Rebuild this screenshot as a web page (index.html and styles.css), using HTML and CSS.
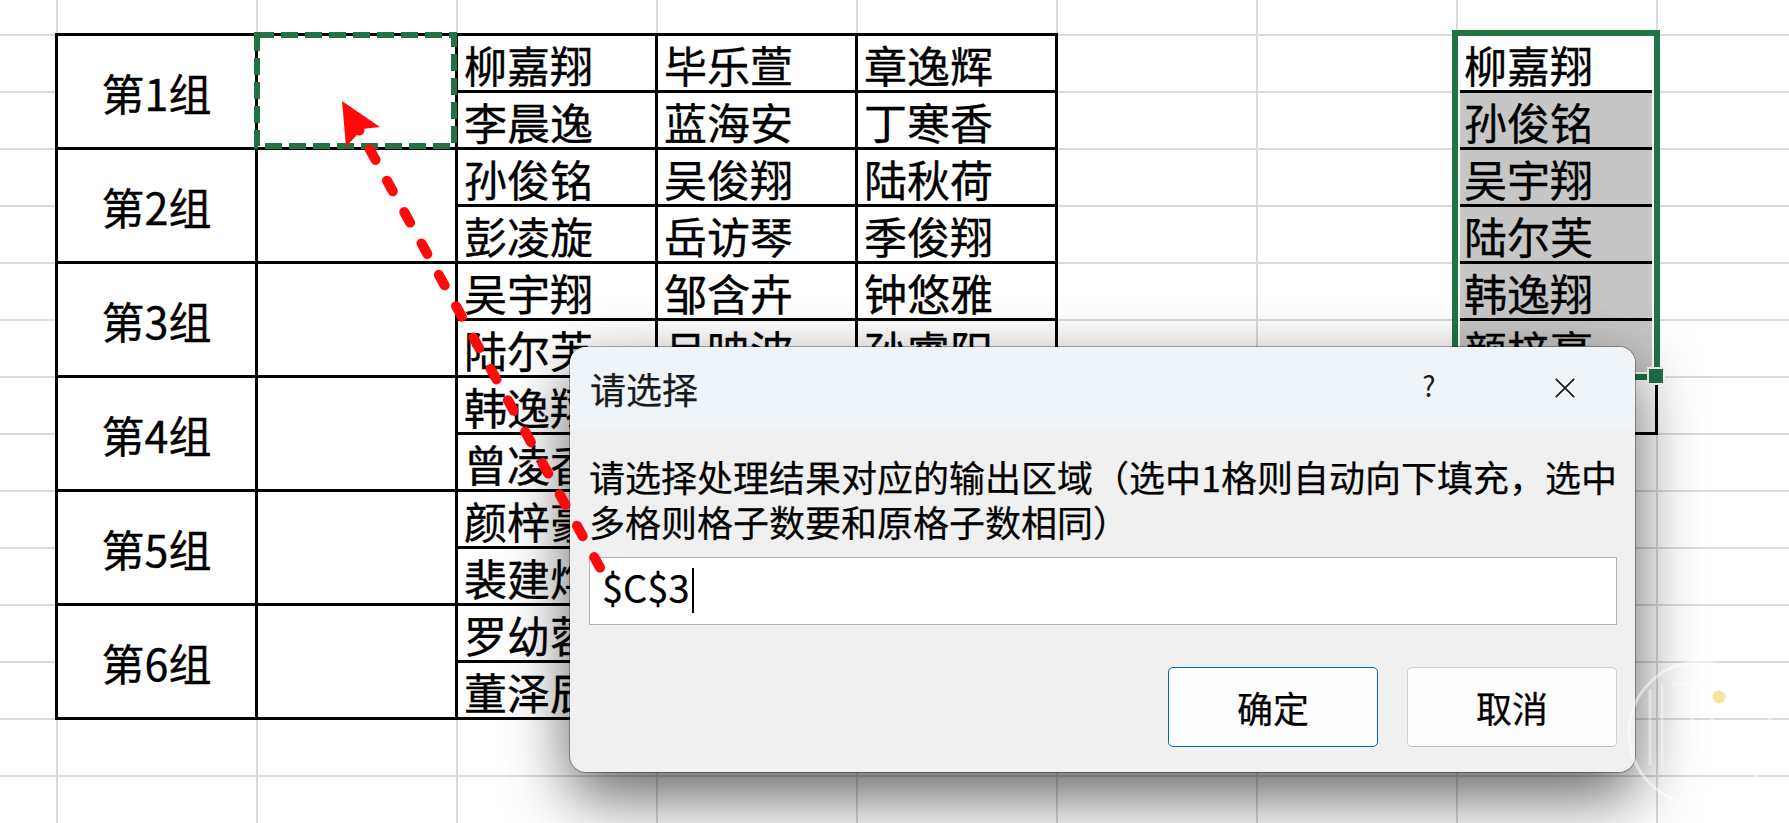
FILE: index.html
```html
<!DOCTYPE html>
<html lang="zh-CN">
<head>
<meta charset="utf-8">
<title>请选择</title>
<link rel="stylesheet" href="styles.css">
</head>
<body>
<div class="sheet">
  <div class="main-table">
    <div class="cell group">第1组</div>
    <div class="cell group target">
      <svg class="marquee" viewBox="0 0 203 117" width="203" height="117"><rect x="3" y="3" width="197" height="111" fill="none" stroke="#217346" stroke-width="6" stroke-dasharray="17 7"/></svg>
    </div>
    <div class="cell name">柳嘉翔</div><div class="cell name">毕乐萱</div><div class="cell name">章逸辉</div>
    <div class="cell name">李晨逸</div><div class="cell name">蓝海安</div><div class="cell name">丁寒香</div>

    <div class="cell group">第2组</div>
    <div class="cell group"></div>
    <div class="cell name">孙俊铭</div><div class="cell name">吴俊翔</div><div class="cell name">陆秋荷</div>
    <div class="cell name">彭凌旋</div><div class="cell name">岳访琴</div><div class="cell name">季俊翔</div>

    <div class="cell group">第3组</div>
    <div class="cell group"></div>
    <div class="cell name">吴宇翔</div><div class="cell name">邹含卉</div><div class="cell name">钟悠雅</div>
    <div class="cell name">陆尔芙</div><div class="cell name">吕映波</div><div class="cell name">孙睿阳</div>

    <div class="cell group">第4组</div>
    <div class="cell group"></div>
    <div class="cell name">韩逸翔</div><div class="cell name">秦雨桐</div><div class="cell name">沈若溪</div>
    <div class="cell name">曾凌香</div><div class="cell name">许文博</div><div class="cell name">何思远</div>

    <div class="cell group">第5组</div>
    <div class="cell group"></div>
    <div class="cell name">颜梓豪</div><div class="cell name">唐语嫣</div><div class="cell name">冯子轩</div>
    <div class="cell name">裴建烨</div><div class="cell name">宋佳琪</div><div class="cell name">高浩然</div>

    <div class="cell group">第6组</div>
    <div class="cell group"></div>
    <div class="cell name">罗幼蓉</div><div class="cell name">林诗涵</div><div class="cell name">周明轩</div>
    <div class="cell name">董泽辰</div><div class="cell name">郭欣怡</div><div class="cell name">谢天佑</div>
  </div>

  <div class="side-table">
    <div class="cell name">柳嘉翔</div>
    <div class="cell name shaded">孙俊铭</div>
    <div class="cell name shaded">吴宇翔</div>
    <div class="cell name shaded">陆尔芙</div>
    <div class="cell name shaded">韩逸翔</div>
    <div class="cell name shaded">颜梓豪</div>
    <div class="cell name">罗幼蓉</div>
    <div class="selection"><span class="fill-handle"></span></div>
  </div>
</div>

<div class="dialog">
  <div class="titlebar">
    <div class="title">请选择</div>
    <div class="title-btns">
      <div class="tbtn help">?</div>
      <div class="tbtn close">
        <svg width="20" height="20" viewBox="0 0 20 20"><path d="M0.8 0.8 L19.2 19.2 M19.2 0.8 L0.8 19.2" stroke="#1a1a1a" stroke-width="1.7" fill="none"/></svg>
      </div>
    </div>
  </div>
  <div class="body">
    <div class="message">
      <span class="line">请选择处理结果对应的输出区域（选中1格则自动向下填充，选中</span>
      <span class="line">多格则格子数要和原格子数相同）</span>
    </div>
    <div class="input"><span class="value">$C$3</span><span class="caret"></span></div>
    <div class="buttons">
      <button class="btn primary">确定</button>
      <button class="btn">取消</button>
    </div>
  </div>
</div>

<svg class="arrow" width="1789" height="823" viewBox="0 0 1789 823">
  <line x1="358" y1="128" x2="603" y2="573" stroke="#ff0a0a" stroke-width="10" stroke-linecap="round" stroke-dasharray="12 23.8" stroke-dashoffset="11.4"/>
  <polygon points="342,101 380,127 362,129 346,147" fill="#ff0a0a"/>
  <circle cx="359" cy="130" r="5.5" fill="#ff0a0a"/>
</svg>

<svg class="watermark" width="1789" height="823" viewBox="0 0 1789 823">
  <circle cx="1700" cy="733" r="71" fill="none" stroke="#ffffff" stroke-opacity="0.5" stroke-width="3"/>
  <path d="M1650 690 L1650 765 M1662 684 L1662 770 M1672 684 L1712 684 M1692 684 L1692 770 M1712 700 L1712 760 M1730 735 L1745 760" fill="none" stroke="#ffffff" stroke-opacity="0.4" stroke-width="3"/>
  <circle cx="1719" cy="697" r="8" fill="#ffffff" fill-opacity="0.7"/>
  <circle cx="1719" cy="697" r="6.5" fill="#f3e79f"/>
</svg>
</body>
</html>
```

FILE: styles.css
```css
html, body {
  margin: 0;
  padding: 0;
}

body {
  width: 1789px;
  height: 823px;
  overflow: hidden;
  position: relative;
  background: #ffffff;
  font-family: "Noto Sans CJK SC", "Microsoft YaHei", sans-serif;
  color: #000;
}

/* spreadsheet canvas with gridlines */
.sheet {
  box-sizing: border-box;
  width: 1789px;
  height: 823px;
  display: flex;
  align-items: flex-start;
  padding: 33px 0 0 55px;
  background-color: #ffffff;
  background-image:
    linear-gradient(to right, #dadada 0, #dadada 2px, transparent 2px),
    linear-gradient(to bottom, #dadada 0, #dadada 2px, transparent 2px);
  background-size: 200px 57px, 200px 57px;
  background-position: 56px 0, 0 34px;
}

.main-table {
  display: grid;
  grid-template-columns: repeat(5, 200px);
  grid-auto-rows: 57px;
  border-top: 3px solid #000;
  border-left: 3px solid #000;
  background: #fff;
}

.side-table {
  position: relative;
  display: grid;
  grid-template-columns: 200px;
  grid-auto-rows: 57px;
  margin-left: 397px;
  border-top: 3px solid #000;
  border-left: 3px solid #000;
  background: #fff;
}

.cell {
  box-sizing: border-box;
  border-right: 3px solid #000;
  border-bottom: 3px solid #000;
  font-size: 43px;
  white-space: nowrap;
  -webkit-text-stroke: 0.35px #000;
}

.group {
  grid-row: span 2;
  display: flex;
  align-items: center;
  justify-content: center;
}

.target {
  position: relative;
}

.marquee {
  position: absolute;
  left: -4px;
  top: -4px;
  display: block;
}

.name {
  line-height: 54px;
  padding: 1px 0 0 6px;
}

.shaded {
  background: #c6c6c6;
}

.selection {
  position: absolute;
  box-sizing: border-box;
  left: -6px;
  top: -6px;
  width: 208px;
  height: 350px;
  border: 6px solid #217346;
  box-shadow: inset 0 0 0 2px #ffffff;
}

.fill-handle {
  position: absolute;
  left: 189px;
  top: 331px;
  width: 14px;
  height: 14px;
  background: #217346;
  border: 2px solid #ffffff;
}

/* dialog window */
.dialog {
  position: absolute;
  left: 570px;
  top: 347px;
  width: 1065px;
  height: 425px;
  box-sizing: border-box;
  border-radius: 16px;
  overflow: hidden;
  background: #f0f0f0;
  box-shadow: 0 0 0 1px rgba(0, 0, 0, 0.3), 0 24px 64px rgba(0, 0, 0, 0.62);
  z-index: 2;
  -webkit-text-stroke: 0.25px currentColor;
}

.titlebar {
  height: 82px;
  display: flex;
  align-items: center;
  background: #eef4f8;
}

.title {
  padding-left: 20px;
  font-size: 36px;
  color: #1a1a1a;
}

.title-btns {
  margin-left: auto;
  display: flex;
  padding-right: 2px;
}

.tbtn {
  width: 136px;
  height: 82px;
  display: flex;
  align-items: center;
  justify-content: center;
  color: #1a1a1a;
}

.tbtn.help {
  font-size: 28px;
  box-sizing: border-box;
  padding-bottom: 6px;
  -webkit-text-stroke: 0;
}

.tbtn svg {
  display: block;
}

.body {
  padding: 25px 18px 0 19px;
}

.message {
  font-size: 36px;
  line-height: 45px;
  color: #000;
}

.message .line {
  display: block;
  white-space: nowrap;
}

.input {
  box-sizing: border-box;
  margin-top: 13px;
  height: 68px;
  border: 1px solid #b3b3b3;
  background: #ffffff;
  display: flex;
  align-items: center;
  padding: 0 0 9px 12px;
  font-size: 38px;
}

.caret {
  display: block;
  width: 2px;
  height: 45px;
  margin: 7px 0 0 2px;
  background: #000;
}

.buttons {
  margin-top: 42px;
  display: flex;
  justify-content: flex-end;
  gap: 29px;
}

.btn {
  box-sizing: border-box;
  width: 210px;
  height: 80px;
  border: 1px solid #cfcfcf;
  border-bottom-color: #bdbdbd;
  border-radius: 5px;
  background: #fdfdfd;
  font-family: "Noto Sans CJK SC", "Microsoft YaHei", sans-serif;
  font-size: 36px;
  color: #000;
  padding: 0;
  -webkit-text-stroke: 0.25px #000;
}

.btn.primary {
  border: 1px solid #0067c0;
}

/* annotations */
.arrow {
  position: absolute;
  left: 0;
  top: 0;
  z-index: 3;
  pointer-events: none;
}

.watermark {
  position: absolute;
  left: 0;
  top: 0;
  z-index: 4;
  pointer-events: none;
}
```
